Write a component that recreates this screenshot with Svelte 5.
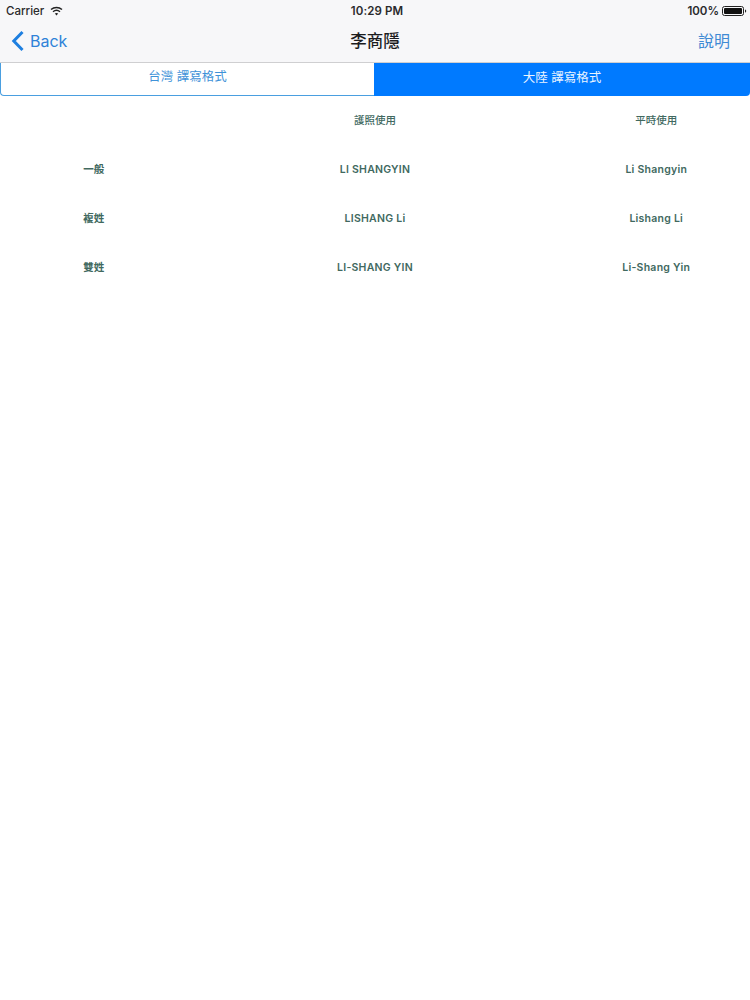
<script>
  const rows = [
    { label: '', formal: '護照使用', casual: '平時使用', head: true },
    { label: '一般', formal: 'LI SHANGYIN', casual: 'Li Shangyin' },
    { label: '複姓', formal: 'LISHANG Li', casual: 'Lishang Li' },
    { label: '雙姓', formal: 'LI-SHANG YIN', casual: 'Li-Shang Yin' }
  ];
</script>

<div class="page">
  <header class="top">
    <div class="status">
      <div class="status-left">
        <span>Carrier</span>
        <svg class="wifi" width="13" height="10" viewBox="0 0 13 10" aria-hidden="true">
          <path d="M1 3.6C4.2.7 8.8.7 12 3.6" fill="none" stroke="#222" stroke-width="1.4"/>
          <path d="M3 5.7c2.1-1.8 4.9-1.8 7 0" fill="none" stroke="#222" stroke-width="1.4"/>
          <path d="M6.5 9.5 4.8 7.6c1-.8 2.4-.8 3.4 0z" fill="#222"/>
        </svg>
      </div>
      <div class="time">10:29 PM</div>
      <div class="status-right">
        <span>100%</span>
        <svg width="25" height="10" viewBox="0 0 25 10" aria-hidden="true">
          <rect x=".5" y=".5" width="21" height="9" rx="2" fill="none" stroke="#222"/>
          <rect x="2" y="2" width="18" height="6" rx="1" fill="#111"/>
          <path d="M23 3.4c.8.2 1.2.8 1.2 1.6s-.4 1.4-1.2 1.6z" fill="#222"/>
        </svg>
      </div>
    </div>
    <nav class="nav">
      <div class="back">
        <svg width="14" height="22" viewBox="0 0 14 22" aria-hidden="true">
          <path d="M11.5 2 2.8 11l8.7 9" fill="none" stroke="#1e7fe0" stroke-width="3"/>
        </svg>
        <span>Back</span>
      </div>
      <div class="title">李商隱</div>
      <div class="help">說明</div>
    </nav>
  </header>

  <div class="segments">
    <div class="seg off">台灣 譯寫格式</div>
    <div class="seg on">大陸 譯寫格式</div>
  </div>

  <div class="table">
    {#each rows as row}
      <div class="cell cjk" class:head={row.head}>{row.label}</div>
      <div class="cell" class:cjk={row.head} class:head={row.head}>{row.formal}</div>
      <div class="cell" class:cjk={row.head} class:head={row.head}>{row.casual}</div>
    {/each}
  </div>
</div>

<style>
  :global(body) {
    margin: 0;
    background: #fff;
  }
  .page {
    width: 750px;
    height: 1000px;
    overflow: hidden;
    font-family: Inter, "Noto Sans CJK TC", sans-serif;
    background: #fff;
  }
  .top {
    height: 63px;
    box-sizing: border-box;
    background: #f7f7f9;
    border-bottom: 1px solid #cfcfd1;
  }
  .status {
    height: 21px;
    padding: 0 3px 0 6px;
    display: grid;
    grid-template-columns: 1fr auto 1fr;
    align-items: center;
    font-size: 11.5px;
    font-weight: 500;
    color: #2a2a2c;
  }
  .time {
    font-weight: 600;
    letter-spacing: 0.1px;
    margin-right: -1px;
  }
  .status-left {
    display: flex;
    align-items: center;
    gap: 6px;
  }
  .status-right {
    display: flex;
    align-items: center;
    justify-content: flex-end;
    gap: 3px;
    font-weight: 600;
  }
  .nav {
    height: 41px;
    padding: 0 20px 3px;
    box-sizing: border-box;
    display: grid;
    grid-template-columns: 1fr auto 1fr;
    align-items: center;
  }
  .back {
    display: flex;
    align-items: center;
    gap: 5px;
    margin: 1px 0 0 -9px;
    font-size: 16px;
    color: #2f82d8;
  }
  .title {
    font-size: 16.5px;
    color: #1c1c1e;
    font-weight: 500;
  }
  .help {
    justify-self: end;
    font-size: 16px;
    color: #3f8ad4;
  }
  .segments {
    display: grid;
    grid-template-columns: 374px 376px;
    height: 33px;
    font-size: 12.5px;
  }
  .seg {
    display: flex;
    align-items: center;
    justify-content: center;
    box-sizing: border-box;
    padding-bottom: 7px;
  }
  .off {
    color: #3f92d8;
    background: #fff;
    border: 1px solid #4a9fe0;
    border-top: 0;
    border-right: 0;
    border-radius: 0 0 0 4px;
  }
  .on {
    color: #eaf4ff;
    background: #007aff;
    border-radius: 0 0 4px 0;
  }
  .table {
    display: grid;
    grid-template-columns: 1fr 2fr 1fr;
    grid-auto-rows: 49px;
  }
  .cell {
    display: flex;
    align-items: center;
    justify-content: center;
    font-size: 10.5px;
    font-weight: 600;
    letter-spacing: 0.25px;
    color: #41695f;
  }
  .cell.cjk {
    letter-spacing: 0;
    padding-bottom: 2px;
  }
  .cell.head {
    font-weight: 500;
  }
</style>
